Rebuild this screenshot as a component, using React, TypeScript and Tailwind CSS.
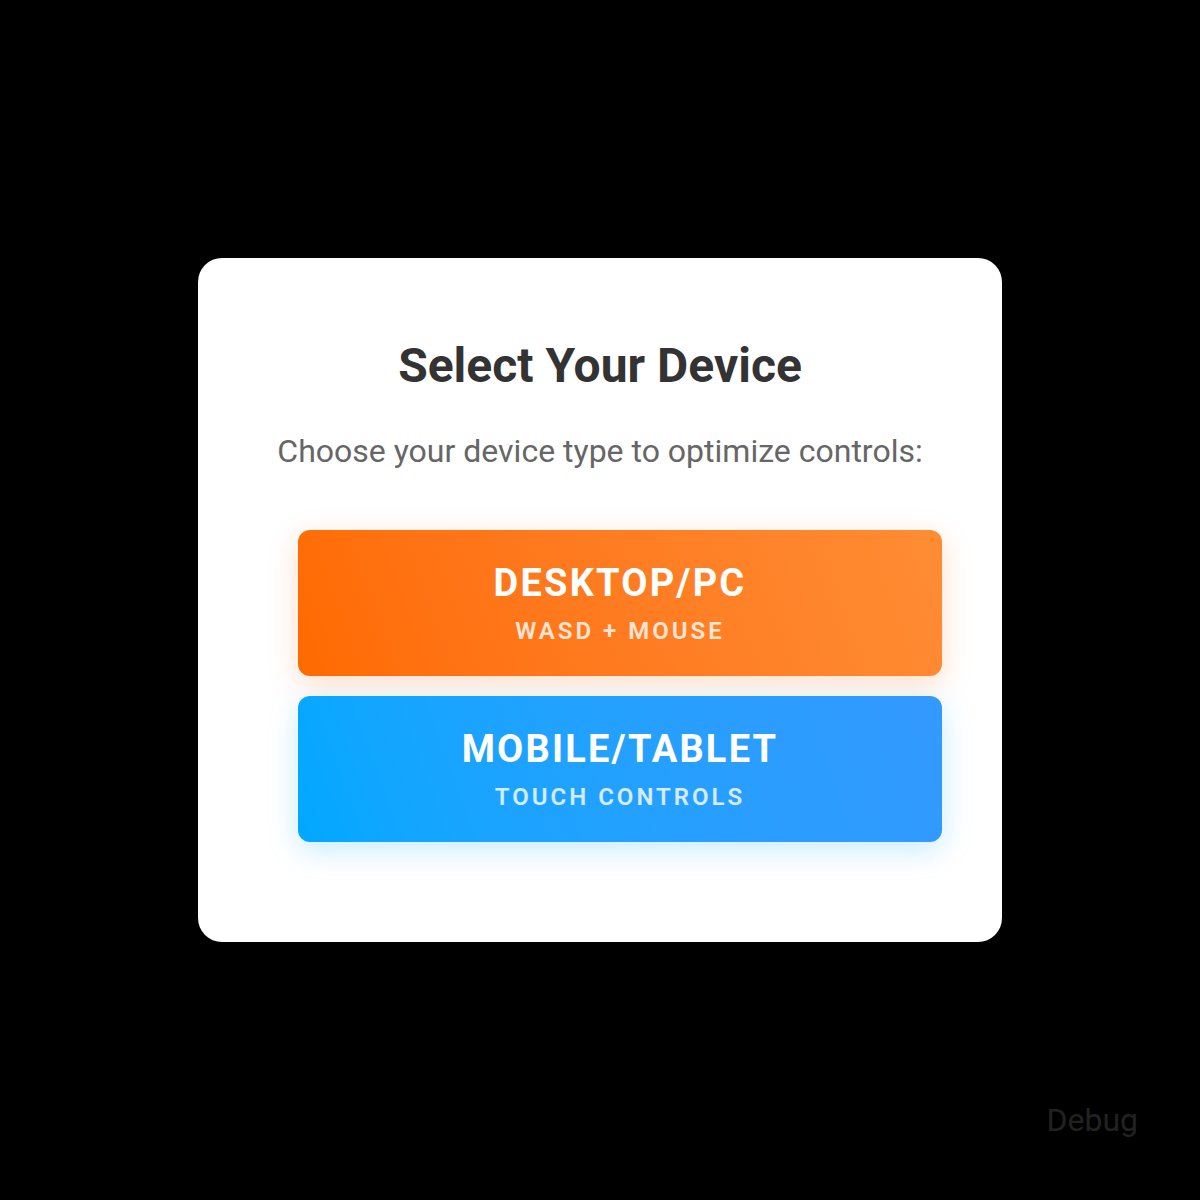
export default function App() {
  return (
    <div className="relative flex min-h-[1200px] w-full items-center justify-center bg-black font-['Roboto',sans-serif]">
      <div className="flex w-[804px] flex-col items-center rounded-[24px] bg-white px-[40px] pb-[100px] pt-[80px]">
        <h1 className="text-[48px] font-bold leading-[56px] text-[#333333]">
          Select Your Device
        </h1>
        <p className="mt-[37px] whitespace-nowrap text-[32px] leading-[40px] text-[#666666]">
          Choose your device type to optimize controls:
        </p>
        <div className="ml-[60px] mt-[59px] flex w-[644px] flex-col gap-5 self-start">
          <button
            type="button"
            className="flex h-[146px] w-full flex-col items-center justify-center rounded-[12px] bg-linear-70 from-[#ff6a00] to-[#ff8c33] shadow-[0_8px_30px_rgba(255,106,0,0.22)]"
          >
            <span className="text-[38px] font-bold leading-[46px] tracking-[2.2px] text-white">
              DESKTOP/PC
            </span>
            <span className="mt-[10px] text-[24px] font-semibold leading-[30px] tracking-[3px] text-white/80">
              WASD + MOUSE
            </span>
          </button>
          <button
            type="button"
            className="flex h-[146px] w-full flex-col items-center justify-center rounded-[12px] bg-linear-70 from-[#00a8ff] to-[#3399ff] shadow-[0_8px_30px_rgba(0,168,255,0.22)]"
          >
            <span className="text-[38px] font-bold leading-[46px] tracking-[2.2px] text-white">
              MOBILE/TABLET
            </span>
            <span className="mt-[10px] text-[24px] font-semibold leading-[30px] tracking-[3px] text-white/80">
              TOUCH CONTROLS
            </span>
          </button>
        </div>
      </div>
      <div className="absolute bottom-[60px] right-[62px] text-[32px] leading-[40px] text-[#222222]">
        Debug
      </div>
    </div>
  );
}
